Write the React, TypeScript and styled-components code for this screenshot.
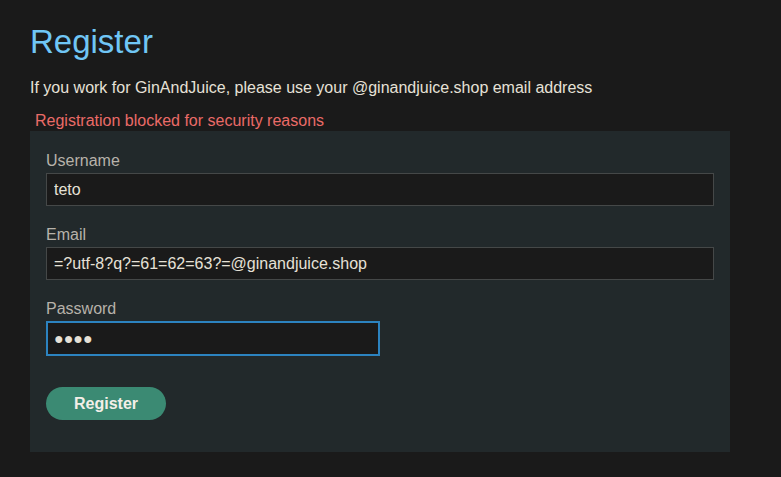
import React from "react";
import styled, { createGlobalStyle } from "styled-components";

const GlobalStyle = createGlobalStyle`
  html, body {
    margin: 0;
    padding: 0;
    background: #1a1a1a;
  }
  body {
    font-family: "Liberation Sans", Arial, sans-serif;
    color: #e6e1d7;
  }
`;

const Page = styled.div`
  width: 781px;
  height: 477px;
  padding: 0 30px;
  box-sizing: border-box;
  overflow: hidden;
`;

const Title = styled.h1`
  margin: 0;
  padding-top: 22px;
  font-size: 33px;
  font-weight: 400;
  line-height: 39px;
  color: #70c6f5;
`;

const Intro = styled.p`
  margin: 18px 0 0;
  font-size: 16px;
  line-height: 18px;
  color: #e6e1d7;
`;

const ErrorText = styled.p`
  margin: 14px 0 0;
  padding-left: 5px;
  font-size: 16px;
  line-height: 20px;
  color: #ea6b68;
`;

const Panel = styled.form`
  width: 700px;
  height: 321px;
  box-sizing: border-box;
  background: #22292b;
  padding: 21px 16px 0;
  display: flex;
  flex-direction: column;
`;

const Field = styled.div<{ $narrow?: boolean }>`
  display: flex;
  flex-direction: column;
  gap: 3px;
  width: ${(p) => (p.$narrow ? "334px" : "668px")};
  margin-bottom: 20px;
`;

const Label = styled.label`
  font-size: 16px;
  line-height: 18px;
  color: #b7b2aa;
`;

const Input = styled.input<{ $focused?: boolean }>`
  box-sizing: border-box;
  width: 100%;
  height: ${(p) => (p.$focused ? "35px" : "33px")};
  background: #1a1a1a;
  border: ${(p) => (p.$focused ? "2px solid #2c83c0" : "1px solid #454848")};
  padding: 0 ${(p) => (p.$focused ? "6px" : "7px")};
  font-family: "Liberation Sans", "DejaVu Sans", Arial, sans-serif;
  font-size: 16px;
  color: #e6e1d7;
  outline: none;
`;

const Button = styled.button`
  margin-top: 11px;
  width: 120px;
  height: 33px;
  border: none;
  border-radius: 17px;
  background: #3b8a73;
  color: #f3efe8;
  font-family: "Liberation Sans", Arial, sans-serif;
  font-size: 16px;
  font-weight: 700;
  cursor: pointer;
`;

export default function App() {
  return (
    <Page>
      <GlobalStyle />
      <Title>Register</Title>
      <Intro>If you work for GinAndJuice, please use your @ginandjuice.shop email address</Intro>
      <ErrorText>Registration blocked for security reasons</ErrorText>
      <Panel onSubmit={(e) => e.preventDefault()}>
        <Field>
          <Label>Username</Label>
          <Input defaultValue="teto" />
        </Field>
        <Field>
          <Label>Email</Label>
          <Input defaultValue="=?utf-8?q?=61=62=63?=@ginandjuice.shop" />
        </Field>
        <Field $narrow>
          <Label>Password</Label>
          <Input $focused defaultValue="●●●●" aria-label="Password" />
        </Field>
        <Button type="submit">Register</Button>
      </Panel>
    </Page>
  );
}
